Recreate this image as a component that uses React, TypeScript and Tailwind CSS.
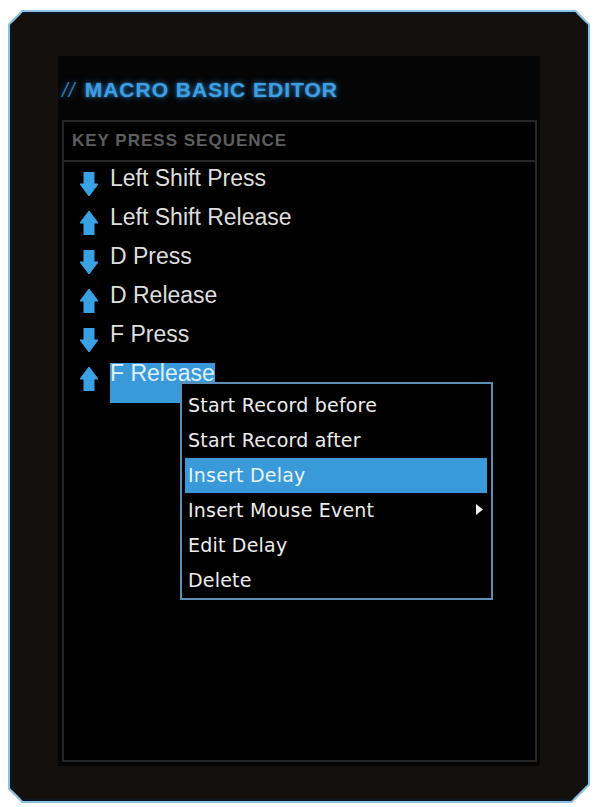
import React from 'react'

type Step = { label: string; dir: 'down' | 'up'; selected?: boolean }

const steps: Step[] = [
  { label: 'Left Shift Press', dir: 'down' },
  { label: 'Left Shift Release', dir: 'up' },
  { label: 'D Press', dir: 'down' },
  { label: 'D Release', dir: 'up' },
  { label: 'F Press', dir: 'down' },
  { label: 'F Release', dir: 'up', selected: true },
]

const menuItems = [
  { label: 'Start Record before' },
  { label: 'Start Record after' },
  { label: 'Insert Delay', active: true },
  { label: 'Insert Mouse Event', submenu: true },
  { label: 'Edit Delay' },
  { label: 'Delete' },
]

function Arrow({ dir }: { dir: 'down' | 'up' }) {
  // chunky blue arrow used for press / release
  const points = dir === 'down' ? '4,0 14,0 14,12 18,12 9,24 0,12 4,12' : '9,0 18,12 14,12 14,24 4,24 4,12 0,12'
  return (
    <svg width="18" height="24" viewBox="0 0 18 24" className="mt-[10px] shrink-0">
      <polygon points={points} fill="#3aa2e4" stroke="#3aa2e4" strokeWidth="1" strokeLinejoin="round" />
    </svg>
  )
}

function ContextMenu() {
  return (
    <div className="absolute left-[116px] top-[260px] w-[313px] h-[218px] border-2 border-[#5c8fb6] bg-black pt-[4px] pl-[3px] pr-[4px] font-['DejaVu_Sans',sans-serif] text-[19px] text-[#ececec]">
      {menuItems.map((m) => (
        <div
          key={m.label}
          className={`relative flex h-[35px] items-center pl-[3px] ${m.active ? 'bg-[#3a9ad9] text-[#e8f4fc]' : ''}`}
        >
          <span className="leading-none tracking-[0.2px]">{m.label}</span>
          {m.submenu && (
            <svg width="7" height="11" viewBox="0 0 7 11" className="absolute right-[4px] top-[11px]">
              <polygon points="0,0 7,5.5 0,11" fill="#f0f0f0" />
            </svg>
          )}
        </div>
      ))}
    </div>
  )
}

export default function App() {
  return (
    <div className="min-h-[807px] w-[596px] bg-white pl-[8px] pt-[10px]">
      {/* outer frame with chamfered corners and thin blue rim */}
      <div className="h-[793px] w-[582px] bg-[#8cc0e0] p-[2px] [clip-path:polygon(14px_0,calc(100%_-_14px)_0,100%_14px,100%_calc(100%_-_18px),calc(100%_-_18px)_100%,14px_100%,0_calc(100%_-_14px),0_14px)]">
        <div className="h-full w-full bg-[#14100e] pl-[48px] pr-[48px] pt-[44px] pb-[35px] [clip-path:polygon(13px_0,calc(100%_-_13px)_0,100%_13px,100%_calc(100%_-_17px),calc(100%_-_17px)_100%,13px_100%,0_calc(100%_-_13px),0_13px)] shadow-[inset_0_0_0_2px_#0a1622]">
          <div className="flex h-full flex-col bg-[#050505] px-[4px] pb-[4px] pr-[3px]">
            <div className="flex h-[64px] shrink-0 items-center pt-[4px] font-['Liberation_Sans',Arial,sans-serif] text-[21px] font-bold">
              <span className="mr-[9px] tracking-[1px] font-normal italic text-[#2f78b0] [text-shadow:0_0_6px_rgba(50,140,220,0.6)]">//</span>
              <span className="tracking-[1px] text-[#3d9fe2] [text-shadow:0_0_6px_rgba(60,160,235,0.75),0_0_2px_rgba(60,160,235,0.6)]">
                MACRO BASIC EDITOR
              </span>
            </div>
            <div className="relative flex-1 border-2 border-[#272727] bg-black">
              <div className="flex h-[40px] items-center border-b-2 border-[#272727] pl-[8px] font-['Liberation_Sans',Arial,sans-serif] text-[17px] font-bold tracking-[1px] text-[#5e5e5e]">
                KEY PRESS SEQUENCE
              </div>
              <div className="flex flex-col pl-[16px] font-['Liberation_Sans',Arial,sans-serif] text-[23px] text-[#dedede]">
                {steps.map((s) => (
                  <div key={s.label} className="flex h-[39px] items-start gap-[12px]">
                    <Arrow dir={s.dir} />
                    {s.selected ? (
                      <span className="mt-[6px] h-[40px] bg-[#3a9ad9] leading-[20px] text-[#dff0ff]">{s.label}</span>
                    ) : (
                      <span className="leading-[32px]">{s.label}</span>
                    )}
                  </div>
                ))}
              </div>
              <ContextMenu />
            </div>
          </div>
        </div>
      </div>
    </div>
  )
}
